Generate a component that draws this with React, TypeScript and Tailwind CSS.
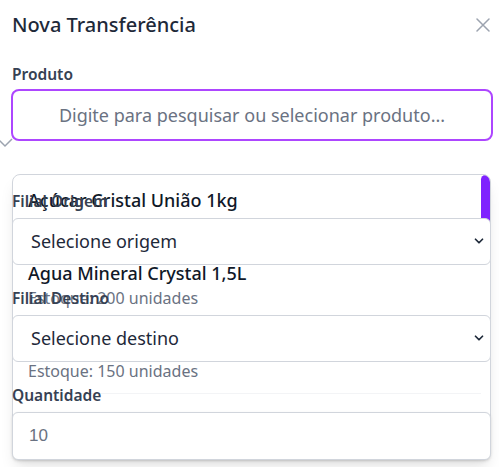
import { ChevronDown } from 'lucide-react';

const produtos = [
  { nome: 'Açúcar Cristal União 1kg', estoque: 320 },
  { nome: 'Agua Mineral Crystal 1,5L', estoque: 200 },
  { nome: 'Arroz Tio João 5kg', estoque: 150 },
  { nome: 'Café Pilão Tradicional 500g', estoque: 90 },
];

function CloseIcon() {
  return (
    <svg width="14" height="14" viewBox="0 0 14 14" fill="none" stroke="#9ca3af" strokeWidth="1.5" strokeLinecap="round">
      <path d="M1 1L13 13M13 1L1 13" />
    </svg>
  );
}

function SelectField({ label, placeholder }: { label: string; placeholder: string }) {
  return (
    <div className="mt-[23px] first:mt-0">
      <label className="block h-5 text-[15.5px] font-semibold leading-5 text-gray-700">{label}</label>
      <div className="relative mt-[7px] w-[479px]">
        <select
          defaultValue=""
          className="block h-[47px] w-full appearance-none rounded-md border border-gray-300 bg-white pl-[18px] pr-8 text-[18px] text-gray-800 outline-none"
        >
          <option value="" disabled>
            {placeholder}
          </option>
        </select>
        <ChevronDown className="pointer-events-none absolute right-[5px] top-[16px] h-[14px] w-[14px] text-gray-800" strokeWidth={3} />
      </div>
    </div>
  );
}

export default function App() {
  return (
    <div className="relative h-[467px] w-[499px] overflow-hidden bg-white font-['Noto_Sans',sans-serif]">
      <div className="flex items-center justify-between pl-3 pr-[9px] pt-[11px]">
        <h2 className="text-[20px] font-medium leading-7 text-gray-800">Nova Transferência</h2>
        <button type="button" className="text-gray-400">
          <CloseIcon />
        </button>
      </div>

      <div className="pl-3">
        <label className="mt-[25px] block h-5 text-[15.5px] font-semibold leading-5 text-gray-700">Produto</label>
        <input
          type="text"
          placeholder="Digite para pesquisar ou selecionar produto..."
          className="-ml-px mt-[5px] block h-[52px] w-[482px] rounded-lg border-2 border-purple-500 bg-white px-4 text-center text-[18px] text-gray-800 outline-none placeholder:text-gray-500"
        />
      </div>

      <svg className="absolute left-0 top-[138px]" width="14" height="10" viewBox="0 0 14 10" fill="none" stroke="#9ca3af" strokeWidth="1.5">
        <path d="M-1 2L5 8L12 1" />
      </svg>

      {/* lista de produtos aberta por baixo dos campos */}
      <div className="absolute left-3 top-[174px] flex h-[286px] w-[479px] overflow-hidden rounded-lg border border-gray-300 bg-white shadow-lg">
        <ul className="flex-1">
          {produtos.map((p) => (
            <li key={p.nome} className="border-b border-gray-100 px-[15px] pb-[10px] pt-3">
              <div className="text-[18px] font-medium leading-[26px] text-gray-900">{p.nome}</div>
              <div className="text-[16px] leading-6 text-gray-500">Estoque: {p.estoque} unidades</div>
            </li>
          ))}
        </ul>
        <div className="w-[9px]">
          <div className="h-[70px] rounded-t-md bg-violet-600" />
        </div>
      </div>

      <div className="relative mt-[50px] pl-3">
        <SelectField label="Filial Origem" placeholder="Selecione origem" />
        <SelectField label="Filial Destino" placeholder="Selecione destino" />
        <div className="mt-[23px]">
          <label className="block h-5 text-[15.5px] font-semibold leading-5 text-gray-700">Quantidade</label>
          <input
            type="number"
            placeholder="10"
            className="mt-[7px] block h-12 w-[479px] rounded-md border border-gray-300 bg-white px-4 font-['Liberation_Sans',sans-serif] text-[17px] text-gray-800 shadow-sm outline-none placeholder:text-gray-500"
          />
        </div>
      </div>
    </div>
  );
}
